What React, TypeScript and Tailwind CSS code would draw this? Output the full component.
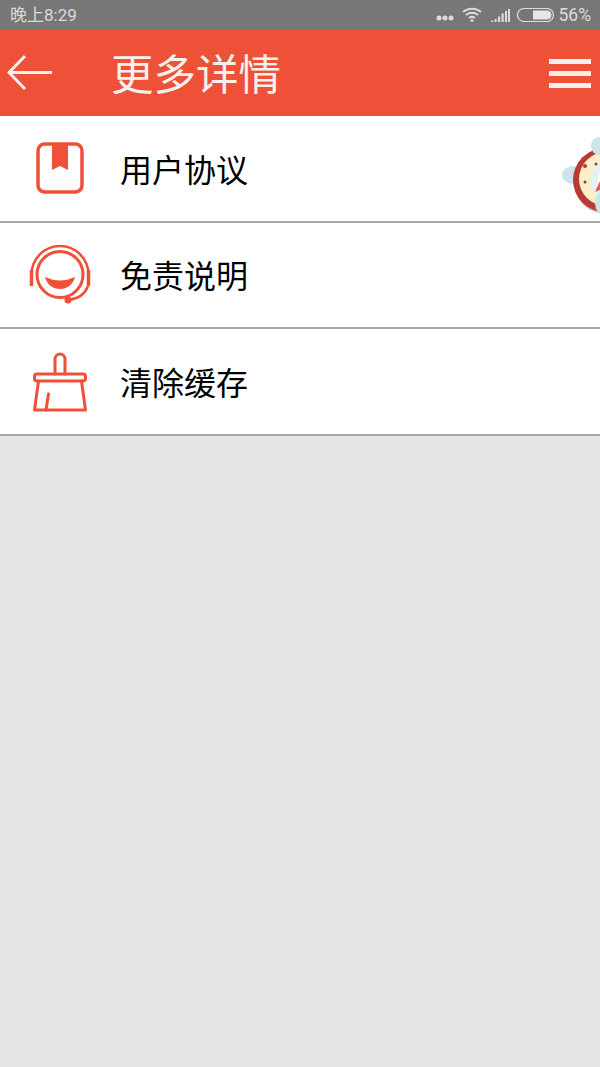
import { ReactNode } from 'react';

const CJK = "font-['Roboto','Noto_Sans_CJK_SC',sans-serif]";

function BookIcon() {
  return (
    <svg width="48" height="52" viewBox="0 0 48 52" fill="none">
      <rect x="2" y="2" width="44" height="48" rx="6.5" stroke="#ee5138" strokeWidth="3.5" />
      <path d="M16 2h16v26l-8-4-8 4z" fill="#ee5138" />
    </svg>
  );
}

function HeadsetIcon() {
  return (
    <svg width="62" height="62" viewBox="0 0 62 62" fill="none" className="mt-[1px]">
      <path d="M2.5 30.5a28.500 28.500 0 0 1 57 0" stroke="#ee5138" strokeWidth="2.500" />
      <path d="M2.500 26v16M59.500 26v16" stroke="#ee5138" strokeWidth="3.500" />
      <circle cx="31" cy="30.500" r="23" stroke="#ee5138" strokeWidth="3" />
      <path d="M16 33q15 7 30 0c-2 8-8 12-15 12s-13-4-15-12z" fill="#ee5138" />
      <path d="M39 56c10-1 17-6 20-14" stroke="#ee5138" strokeWidth="2.500" />
      <circle cx="39" cy="56" r="3.500" fill="#ee5138" />
    </svg>
  );
}

function BroomIcon() {
  return (
    <svg width="56" height="60" viewBox="0 0 56 60" fill="none" stroke="#ee5138" strokeWidth="3" strokeLinejoin="round" strokeLinecap="round" className="mt-[1px]">
      <path d="M23 22V7a5 5 0 0 1 10 0v15" />
      <rect x="2.500" y="22" width="51" height="7" rx="2.500" />
      <path d="M6.500 29 2.500 58h51l-4-29" />
      <path d="M14 58l2.500-16" />
    </svg>
  );
}

function Mascot() {
  return (
    <svg width="38" height="78" viewBox="0 0 38 78" className="absolute right-0 top-[21px]">
      <circle cx="44" cy="45" r="32" fill="#c9c9c9" />
      <ellipse cx="11" cy="38" rx="11" ry="9" fill="#cfe3ea" />
      <circle cx="43" cy="43" r="32" fill="#b93a35" />
      <circle cx="44" cy="42" r="27" fill="#fbeecb" />
      <circle cx="50" cy="44" r="21" fill="#e4f1f5" />
      <circle cx="46" cy="42" r="10" fill="#fbfdfe" />
      <ellipse cx="37" cy="9" rx="8" ry="9" fill="#cfe3ea" />
      <ellipse cx="42" cy="66" rx="9" ry="12" fill="#cfe3ea" />
      <circle cx="23" cy="29" r="2" fill="#c8322c" />
      <circle cx="34" cy="27" r="1.500" fill="#555555" />
      <circle cx="23" cy="45" r="1.500" fill="#555555" />
      <path d="M33 55l5-11v9z" fill="#e25a5a" />
    </svg>
  );
}

function Row({ icon, label, children }: { icon: ReactNode; label: string; children?: ReactNode }) {
  return (
    <div className="relative flex h-[106.5px] items-center overflow-hidden border-b-2 border-[#a6a6a6] bg-white">
      <div className="flex w-[120px] justify-center">{icon}</div>
      <span className={`${CJK} pt-[5px] text-[32px] leading-none text-black`}>{label}</span>
      {children}
    </div>
  );
}

export default function App() {
  return (
    <div className={`${CJK} flex h-[1067px] w-[600px] flex-col overflow-hidden bg-[#e3e4e6]`}>
      {/* status bar */}
      <div className="flex h-[30px] items-center justify-between bg-[#777777] pl-[10px] pr-[9px] text-[#dcdcdc]">
        <span className="pt-[1px] text-[17px]">晚上8:29</span>
        <div className="flex items-center">
          <svg width="18" height="6" viewBox="0 0 18 6" fill="#dcdcdc" className="mr-[8px] mt-[6px]">
            <circle cx="3" cy="3" r="2.500" />
            <circle cx="9" cy="3" r="2.500" />
            <circle cx="15" cy="3" r="2.500" />
          </svg>
          <svg width="20" height="15" viewBox="0 0 20 15" fill="none" stroke="#dcdcdc" strokeWidth="2" className="mr-[9px] mb-[1px]">
            <path d="M1 5c5-4.500 13-4.500 18 0" />
            <path d="M4 8c3.500-3 8.500-3 12 0" />
            <path d="M7 11c2-1.500 4-1.500 6 0" />
            <circle cx="10" cy="13.500" r="1.500" fill="#dcdcdc" stroke="none" />
          </svg>
          <svg width="19" height="13" viewBox="0 0 19 13" fill="#dcdcdc" className="mr-[7px]">
            <path d="M0 13v-1.500h2V13zM3.500 13v-3h2.200v3zM7 13V7.500h2.200V13zM10.500 13V4.500h2.200V13zM14 13V2h2v11zM17 13V0h2v13z" />
          </svg>
          <svg width="37" height="14" viewBox="0 0 37 14" fill="none" className="mr-[5px]">
            <rect x="0.500" y="0.500" width="36" height="13" rx="6.500" stroke="#dcdcdc" strokeWidth="1.200" />
            <path d="M16 2.500h14a4.500 4.500 0 0 1 0 9H16z" fill="#e6e6e6" />
          </svg>
          <span className="pt-[1px] text-[17.5px]">56%</span>
        </div>
      </div>

      {/* header */}
      <div className="flex h-[86px] items-center bg-[#ee5138] text-[#f5f2ee]">
        <svg width="46" height="36" viewBox="0 0 46 36" fill="none" stroke="#f5f2ee" strokeWidth="3" className="ml-[7px]">
          <path d="M18 1 2 17.500 18 34" />
          <path d="M2 17.500h43" />
        </svg>
        <span className="ml-[58px] pt-[6px] text-[42.5px] leading-none">更多详情</span>
        <div className="ml-auto mr-[9px] mt-[1px] flex w-[42px] flex-col gap-[7px]">
          <div className="h-[5px] bg-[#f3f0ec]" />
          <div className="h-[5px] bg-[#f3f0ec]" />
          <div className="h-[5px] bg-[#f3f0ec]" />
        </div>
      </div>

      {/* list */}
      <Row icon={<BookIcon />} label="用户协议">
        <Mascot />
      </Row>
      <Row icon={<HeadsetIcon />} label="免责说明" />
      <Row icon={<BroomIcon />} label="清除缓存" />
    </div>
  );
}
